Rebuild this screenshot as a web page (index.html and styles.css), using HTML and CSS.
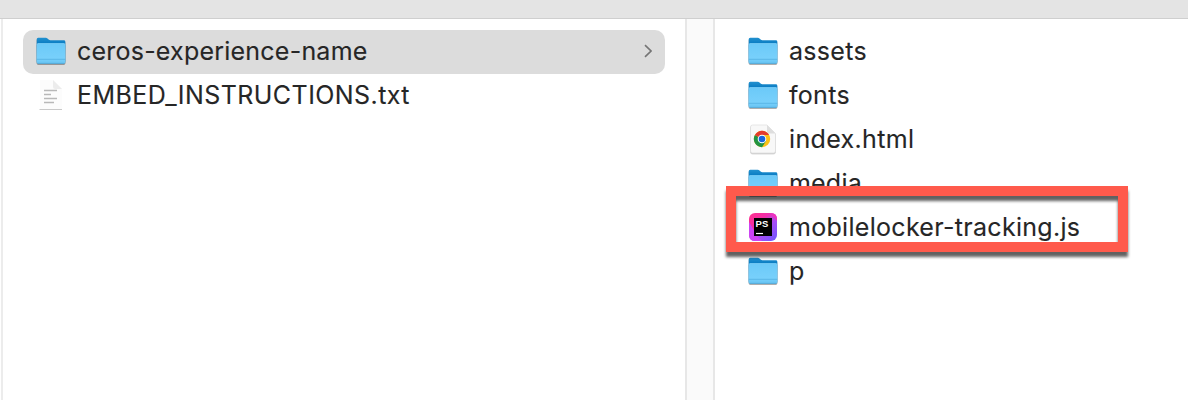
FILE: index.html
```html
<!DOCTYPE html>
<html lang="en">
<head>
<meta charset="utf-8">
<title>Files</title>
<link rel="stylesheet" href="styles.css">
</head>
<body>
<svg class="defs" aria-hidden="true">
  <defs>
    <linearGradient id="back" x1="0" y1="0" x2="0" y2="1"><stop offset="0" stop-color="#2391cf"/><stop offset=".25" stop-color="#087bc2"/><stop offset="1" stop-color="#3da5de"/></linearGradient>
    <linearGradient id="front" x1="0" y1="0" x2="0" y2="1"><stop offset="0" stop-color="#6bc9f8"/><stop offset=".75" stop-color="#78d0fb"/><stop offset="1" stop-color="#66c3f3"/></linearGradient>
    <linearGradient id="app" x1="0" y1="0" x2="1" y2="1"><stop offset="0" stop-color="#ff318c"/><stop offset=".35" stop-color="#f32ea8"/><stop offset=".6" stop-color="#a94cf5"/><stop offset="1" stop-color="#6b57ff"/></linearGradient>
    <symbol id="folder" viewBox="0 0 30 30">
      <path d="M.7 3.2Q.7 1.7 2.2 1.7H9.8Q10.8 1.7 11.5 2.4L12.6 3.4Q13.4 4.2 14.4 4.2H27.8Q29.3 4.2 29.3 5.6V26H.7Z" fill="url(#back)"/>
      <path d="M.7 8.6Q.7 7.4 2 7.4H28Q29.3 7.4 29.3 8.6V26.3Q29.3 27.7 27.8 27.7H2.2Q.7 27.7 .7 26.3Z" fill="url(#front)"/>
      <path d="M1.5 7.6H28.5" stroke="#8edafd" stroke-width=".7"/>
      <path d="M.7 23.3H29.3" stroke="#4dade0" stroke-width=".7"/>
      <path d="M1.5 27.4H28.5" stroke="#4aa5d4" stroke-width=".7"/>
    </symbol>
  </defs>
</svg>
<div class="finder">
  <header class="toolbar"></header>
  <main class="columns">
    <section class="column first">
      <div class="row selected">
        <svg class="icon folder"><use href="#folder"/></svg>
        <span class="name n-ceros">ceros-experience-name</span>
        <svg class="chevron" viewBox="0 0 8 14"><path d="M1 1.2L7 7L1 12.8" fill="none" stroke="#757575" stroke-width="1.6"/></svg>
      </div>
      <div class="row">
        <svg class="icon sheet" viewBox="0 0 30 30">
          <path d="M4 0H17L26 9V29H4Z" fill="#fcfcfc"/>
          <path d="M17 0L26 9H19Q17 9 17 7Z" fill="#ececec"/>
          <path d="M3.5 29.5H26" stroke="#c9c9c9" stroke-width="1"/>
          <path d="M8 10.5H21M8 14.5H15M8 18.5H21M8 22.5H18" stroke="#b8b8b8" stroke-width="1.6"/>
        </svg>
        <span class="name n-embed">EMBED_INSTRUCTIONS.txt</span>
      </div>
    </section>
    <div class="gutter"></div>
    <section class="column second">
      <div class="row"><svg class="icon folder"><use href="#folder"/></svg><span class="name n-assets">assets</span></div>
      <div class="row"><svg class="icon folder"><use href="#folder"/></svg><span class="name n-fonts">fonts</span></div>
      <div class="row">
        <svg class="icon page" viewBox="0 0 30 30">
          <path d="M4.5 1H19L27.5 9.5V27Q27.5 29 25.5 29H4.5Q2.5 29 2.5 27V3Q2.5 1 4.5 1Z" fill="#f8f8f8" stroke="#dedede" stroke-width=".7"/>
          <path d="M19 1L27.5 9.5H21Q19 9.5 19 7.5Z" fill="#dedede"/>
          <circle cx="14" cy="15" r="8.2" fill="#fbc116"/>
          <path d="M14 15L6.9 10.9A8.2 8.2 0 0 0 14 23.2L18 17Z" fill="#229342"/>
          <path d="M14 15L6.9 10.9A8.2 8.2 0 0 1 21.1 10.9H14Z" fill="#e33b2e"/>
          <circle cx="14" cy="15" r="4.3" fill="#fff"/><circle cx="14" cy="15" r="3.3" fill="#1a67dc"/>
        </svg>
        <span class="name n-index">index.html</span>
      </div>
      <div class="row"><svg class="icon folder"><use href="#folder"/></svg><span class="name n-media">media</span></div>
      <div class="row">
        <svg class="icon app" viewBox="0 0 30 30">
          <rect x="1" y="1" width="28" height="28" rx="6" fill="url(#app)"/>
          <path d="M1 10L10 25L14 29H7Q1 29 1 23Z" fill="#cc44f4"/>
          <path d="M22 1L29 9V7Q29 1 23 1Z" fill="#ef31bd"/>
          <rect x="6" y="6" width="18" height="18" fill="#000"/>
          <text x="7.6" y="15" class="badge">PS</text>
          <path d="M8 21.5H15" stroke="#fff" stroke-width="1.2"/>
        </svg>
        <span class="name n-mobile">mobilelocker-tracking.js</span>
      </div>
      <div class="row"><svg class="icon folder"><use href="#folder"/></svg><span class="name n-p">p</span></div>
    </section>
  </main>
  <div class="highlight"></div>
</div>
</body>
</html>
```

FILE: styles.css
```css
* { box-sizing: border-box; }
body { margin: 0; background: #fff; }
.defs { position: absolute; width: 0; height: 0; }
.finder {
  position: relative;
  display: flex;
  flex-direction: column;
  width: 1188px;
  height: 400px;
  overflow: hidden;
  font-family: Inter, "Liberation Sans", sans-serif;
  font-size: 25px;
  color: #262626;
}
.toolbar { height: 19px; flex: none; background: #e4e4e4; border-bottom: 1px solid #cfcfcf; }
.columns { display: flex; flex: 1; }
.column { padding-top: 11px; }
.first { width: 685px; padding-left: 20px; padding-right: 21px; border-left: 2px solid #ececec; margin-left: 1px; }
.gutter { width: 30px; background: #fafafa; border: solid #e7e7e7; border-width: 0 2px; margin-left: -1px; }
.second { flex: 1; padding-left: 20px; }
.row { display: flex; align-items: center; height: 44px; padding-left: 13px; }
.selected { background: #dcdcdc; border-radius: 10px; padding-right: 13px; }
.icon { width: 30px; height: 30px; flex: none; margin-right: 11px; margin-bottom: 2px; overflow: visible; }
.folder { filter: drop-shadow(0 1px .7px rgba(0, 0, 0, .35)); }
.page { filter: drop-shadow(0 1px .7px rgba(0, 0, 0, .2)); }
.name { white-space: nowrap; line-height: 42px; padding-bottom: 2px; -webkit-text-stroke: .12px #262626; }
.n-ceros { letter-spacing: .22px; }
.n-embed { letter-spacing: .43px; }
.n-assets, .n-fonts { letter-spacing: .3px; }
.n-index { letter-spacing: .35px; }
.n-media { letter-spacing: .2px; }
.n-mobile { letter-spacing: .3px; }
.chevron { width: 8px; height: 14px; margin-left: auto; margin-bottom: 2px; }
.badge { font: 700 9.5px "Liberation Sans", sans-serif; fill: #fff; }
.highlight {
  position: absolute;
  left: 726px;
  top: 186px;
  width: 402px;
  height: 66px;
  border: 10px solid #ff5a4c;
  filter: drop-shadow(0 5px 1.6px rgba(0, 0, 0, .62));
}
```
